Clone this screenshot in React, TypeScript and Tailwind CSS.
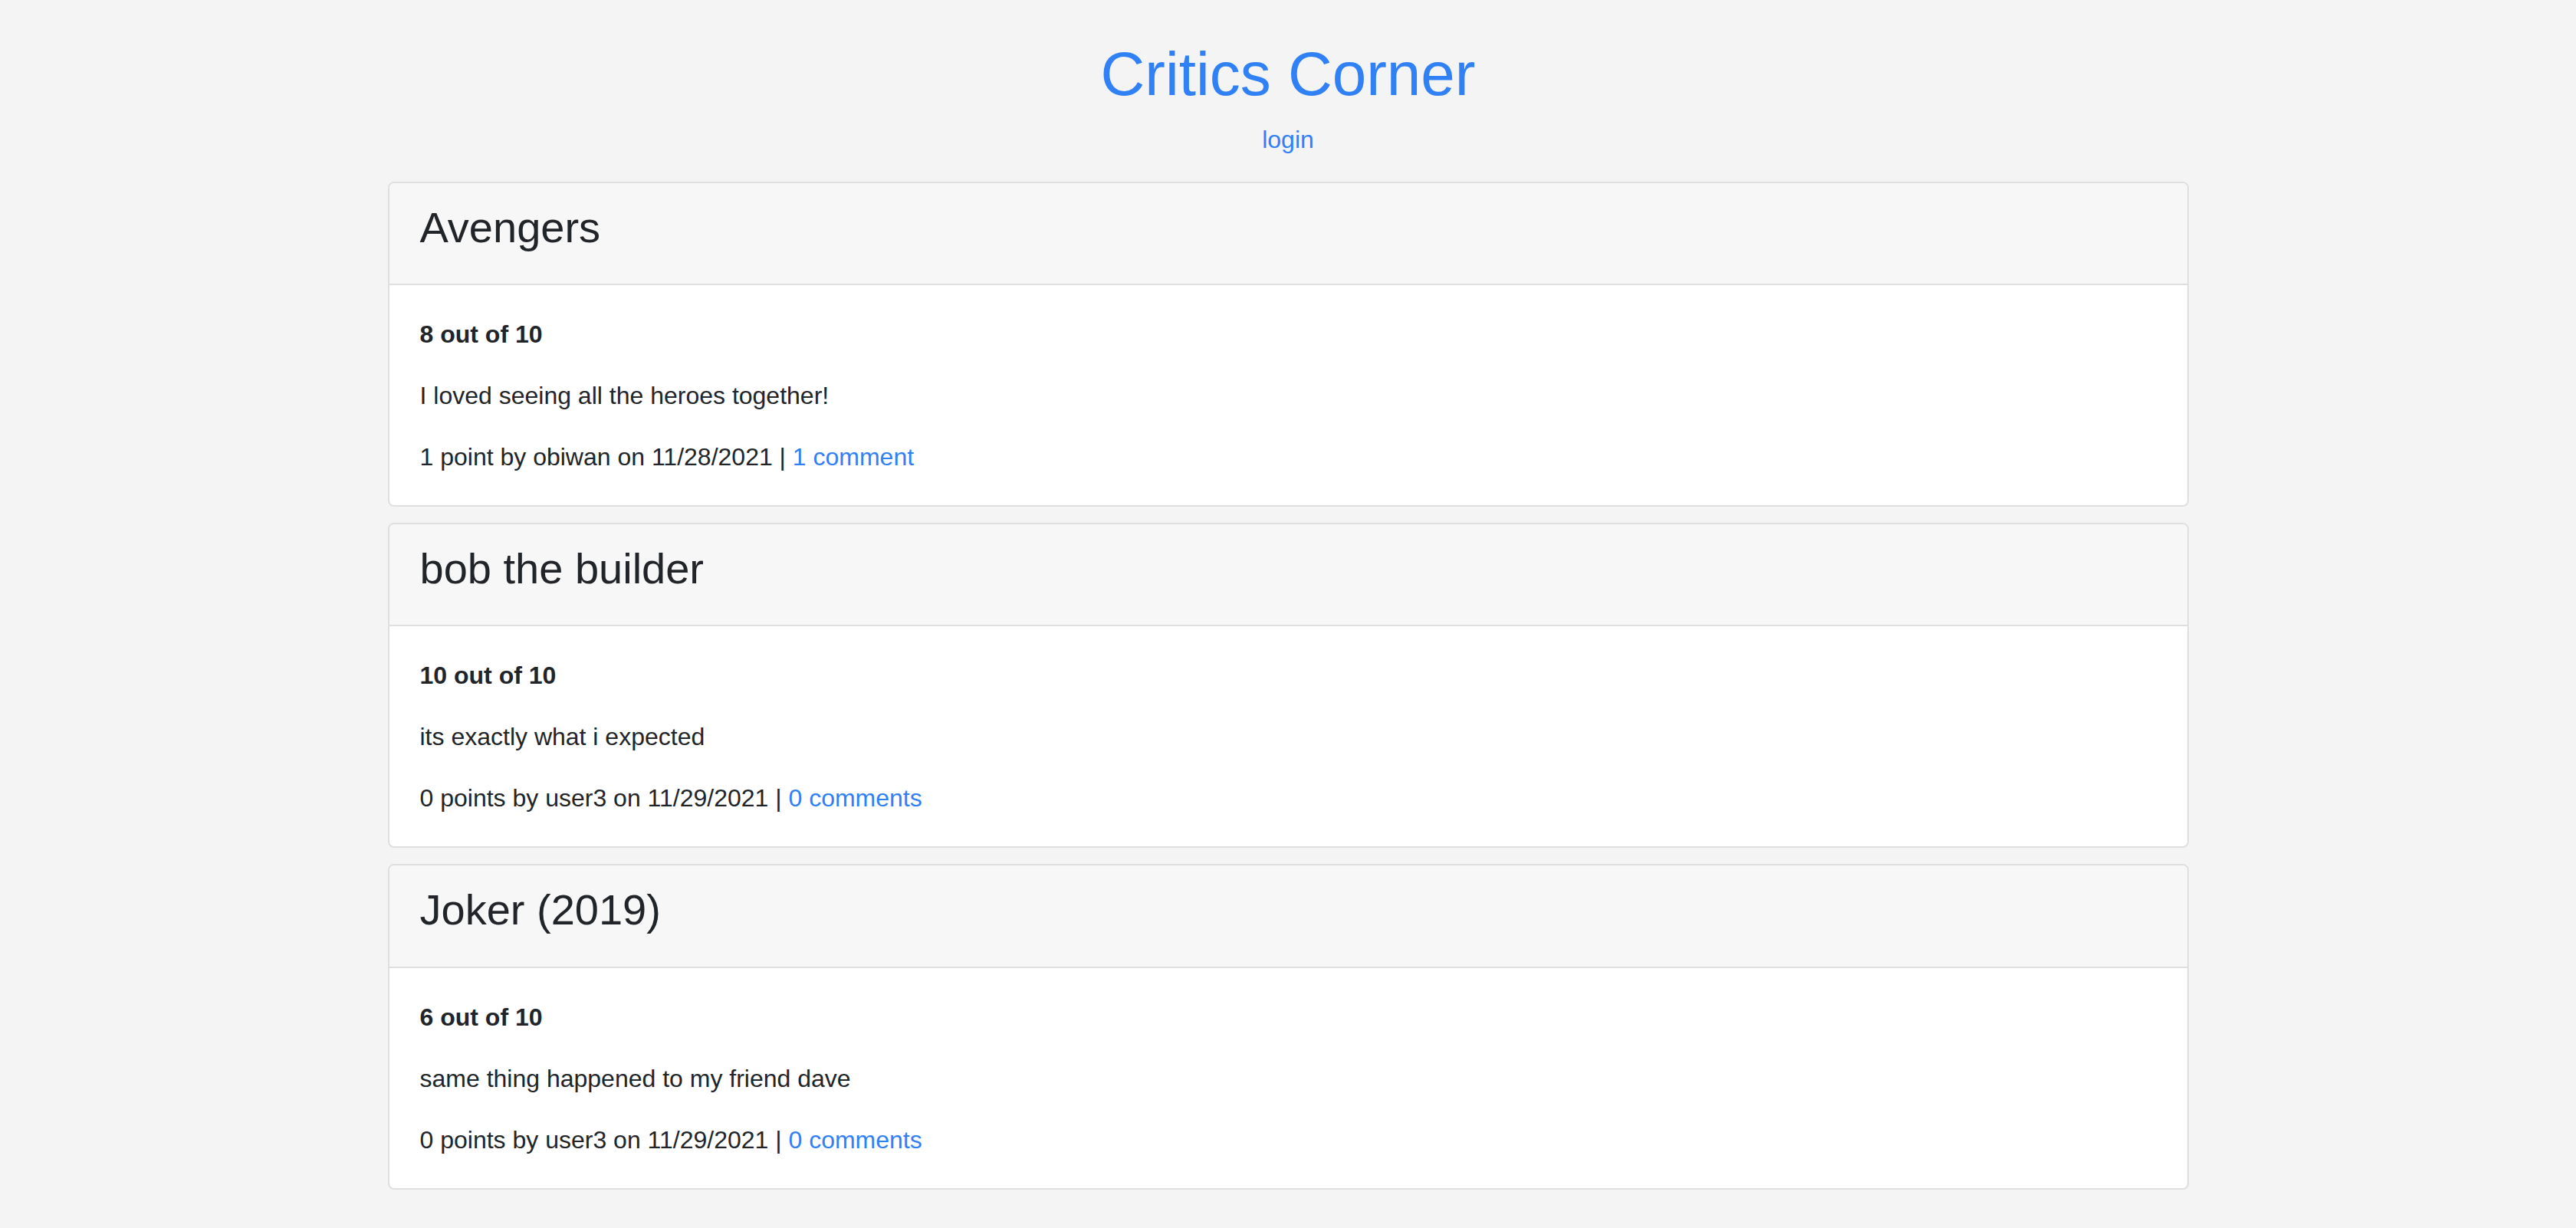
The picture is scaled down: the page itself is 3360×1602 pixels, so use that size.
const reviews = [
  {
    title: "Avengers",
    score: "8 out of 10",
    text: "I loved seeing all the heroes together!",
    meta: "1 point by obiwan on 11/28/2021",
    comments: "1 comment",
  },
  {
    title: "bob the builder",
    score: "10 out of 10",
    text: "its exactly what i expected",
    meta: "0 points by user3 on 11/29/2021",
    comments: "0 comments",
  },
  {
    title: "Joker (2019)",
    score: "6 out of 10",
    text: "same thing happened to my friend dave",
    meta: "0 points by user3 on 11/29/2021",
    comments: "0 comments",
  },
]

function ReviewCard({ review }: { review: (typeof reviews)[number] }) {
  return (
    <div className="rounded-[8px] border-2 border-[#dfdfdf] bg-white">
      <div className="rounded-t-[6px] border-b-2 border-[#dfdfdf] bg-[#f7f7f7] px-[40px] py-[24px]">
        <h3 className="mb-[16px] text-[56px] leading-[1.2] font-medium text-[#212529]">{review.title}</h3>
      </div>
      <div className="px-[40px] pt-[40px] pb-[39px] text-[32px] leading-[1.5] text-[#212529]">
        <p className="mb-[32px] font-bold">{review.score}</p>
        <p className="mb-[32px]">{review.text}</p>
        <p>
          {review.meta} |{" "}
          <a href="#" className="text-[#3080f6]">
            {review.comments}
          </a>
        </p>
      </div>
    </div>
  )
}

export default function App() {
  return (
    <div className="min-h-[1602px] bg-[#f4f4f4] pt-[49px] font-['Liberation_Sans',Arial,sans-serif]">
      <div className="text-center">
        <h1 className="text-[80px] leading-[1.2] font-medium text-[#3080f6]">Critics Corner</h1>
        <a href="#" className="mt-[13px] inline-block text-[32px] leading-[1.5] text-[#3080f6]">
          login
        </a>
      </div>
      <div className="mx-auto mt-[31px] flex w-[2349px] flex-col gap-[21px]">
        {reviews.map((r) => (
          <ReviewCard key={r.title} review={r} />
        ))}
      </div>
    </div>
  )
}
